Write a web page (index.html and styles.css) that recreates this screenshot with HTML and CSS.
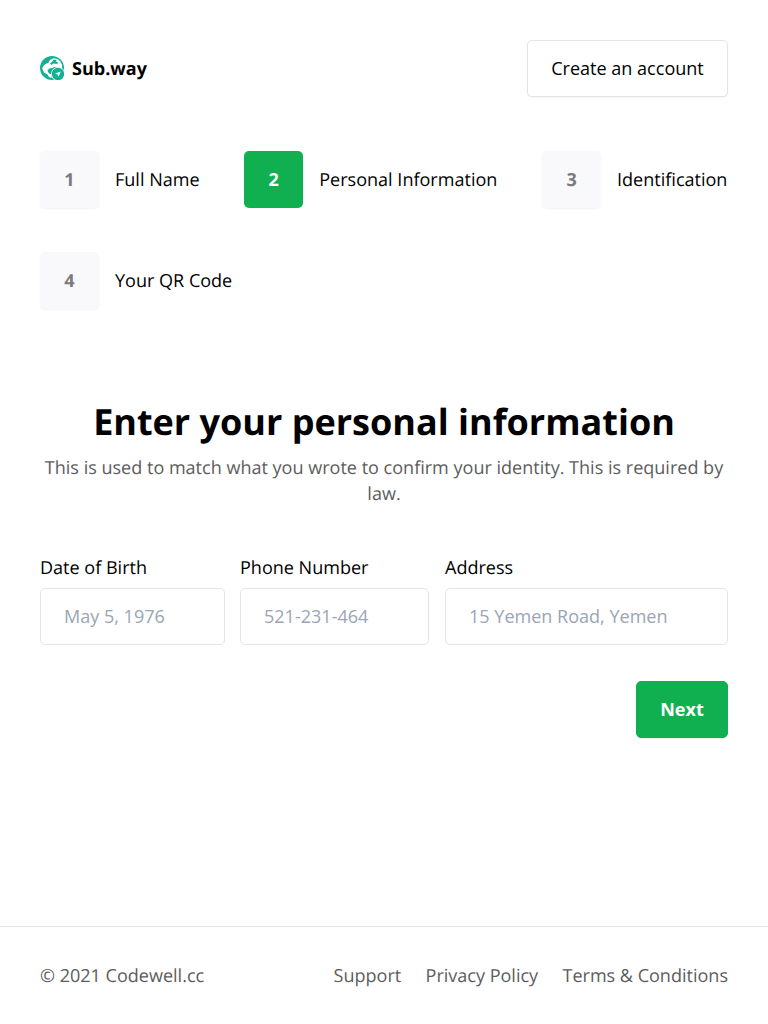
FILE: index.html
```html
<!DOCTYPE html>
<html lang="en">
<head>
<meta charset="utf-8">
<title>Sub.way</title>
<link rel="stylesheet" href="styles.css">
</head>
<body>
<header class="header">
  <a class="brand">
    <svg class="logo" width="24" height="24" viewBox="0 0 24 24">
      <circle cx="12" cy="12" r="12" fill="#14b095"/>
      <path d="M2.200 12.500C3 9.500 5 8 8.500 6.800L10 4 13.500 2.300 17.500 3 20.500 5.500 22 9 22.200 13 18 11 14.500 11 12 12 9 12.500 7.500 15 9 17.500 11.500 18.500 11.500 22 9 21 7.500 18.500 4 16.500Z" fill="#fff"/>
      <path d="m10 7.500 2-1.500 1.500-2.500 3 .5-.5 1.500 2.500 1.300-2 1.200-3-.5-2 1.500Z" fill="#14b095"/>
      <circle cx="18" cy="18" r="7" fill="#fff"/>
      <circle cx="18" cy="18" r="6.200" fill="#14b095"/>
      <path d="m20.800 15.400-5.800 2.200 2.600.8.800 2.600Z" fill="#fff"/>
    </svg>
    <span>Sub.way</span>
  </a>
  <button class="button outline">Create an account</button>
</header>
<main class="main">
  <ol class="steps">
    <li class="step"><span class="number">1</span><span>Full Name</span></li>
    <li class="step active"><span class="number">2</span><span>Personal Information</span></li>
    <li class="step"><span class="number">3</span><span>Identification</span></li>
    <li class="step"><span class="number">4</span><span>Your QR Code</span></li>
  </ol>
  <h1 class="title">Enter your personal information</h1>
  <p class="lead">This is used to match what you wrote to confirm your identity. This is required by law.</p>
  <form class="form">
    <label class="field"><span>Date of Birth</span><input class="input" placeholder="May 5, 1976"></label>
    <label class="field"><span>Phone Number</span><input class="input" placeholder="521-231-464"></label>
    <label class="field"><span>Address</span><input class="input" placeholder="15 Yemen Road, Yemen"></label>
  </form>
  <div class="actions"><button class="button primary">Next</button></div>
</main>
<footer class="footer">
  <span>© 2021 Codewell.cc</span>
  <nav class="links"><a>Support</a><a>Privacy Policy</a><a>Terms &amp; Conditions</a></nav>
</footer>
</body>
</html>
```
FILE: styles.css
```css
* { box-sizing: border-box; }
body {
  margin: 0;
  min-height: 1024px;
  display: flex;
  flex-direction: column;
  font: 18.04px/26px "Open Sans", sans-serif;
  text-rendering: geometricPrecision;
  color: #000;
  background: #fff;
}
.header {
  display: flex;
  justify-content: space-between;
  align-items: center;
  padding: 40px 40px 0;
}
.brand { display: flex; align-items: center; gap: 8px; font-weight: 700; }
.logo { margin-bottom: 1px; }
.button {
  height: 57px;
  padding: 0 23px 2px;
  border: 1px solid #e4e4e4;
  border-radius: 5px;
  font: inherit;
  color: #000;
  background: #fff;
  box-shadow: 0 1px 2px rgba(0, 0, 0, .05);
}
.outline { width: 201px; }
.main { flex: 1; padding: 54px 40px 0; }
.steps {
  display: flex;
  flex-wrap: wrap;
  gap: 44px 44.7px;
  margin: 0 -8px 0 0;
  padding: 0;
  list-style: none;
}
.step { display: flex; align-items: center; gap: 16px; }
.number {
  width: 59px;
  height: 57px;
  display: grid;
  place-items: center;
  border-radius: 5px;
  font-weight: 700;
  color: #7b7b7b;
  background: #f9f9fb;
  box-shadow: 0 1px 2px rgba(0, 0, 0, .05);
}
.active .number { color: #fff; background: #10b050; box-shadow: none; }
.title { margin: 88px 0 0; font-size: 36px; line-height: 50px; text-align: center; }
.lead { margin: 8px 0 0; text-align: center; color: #5c5c5c; }
.form {
  display: grid;
  grid-template-columns: 185px 189px 283px;
  column-gap: 15px;
  margin-top: 48px;
}
.field { display: flex; flex-direction: column; gap: 7px; }
.field:last-child { margin: 0 -1px 0 1px; }
.input {
  width: 100%;
  height: 57px;
  padding: 0 23px 2px;
  border: 1px solid #e4e4e4;
  border-radius: 5px;
  font: inherit;
}
.input::placeholder { color: #9aa5b5; }
.actions { display: flex; justify-content: flex-end; margin-top: 36px; }
.primary { width: 92px; border-color: #10b050; background: #10b050; color: #fff; font-weight: 700; }
.footer {
  display: flex;
  justify-content: space-between;
  align-items: center;
  height: 98px;
  padding: 0 40px;
  border-top: 1px solid #e4e4e4;
  color: #5c5c5c;
}
.links { display: flex; gap: 24.3px; }
```
